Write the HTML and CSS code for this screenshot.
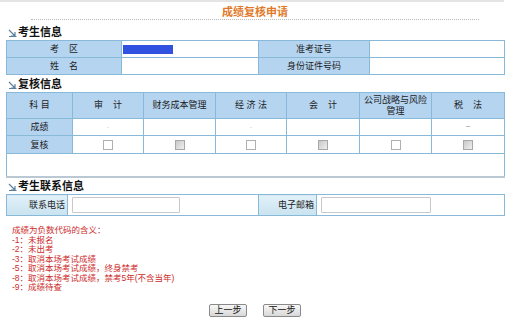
FILE: index.html
```html
<!DOCTYPE html>
<html lang="zh">
<head>
<meta charset="utf-8">
<link rel="stylesheet" href="styles.css">
</head>
<body>
<div class="topbar"></div>
<div class="page">
  <div class="title"><span>成绩复核申请</span></div>

  <div class="sec"><svg class="ico" width="9" height="8" viewBox="0 0 9 8"><path d="M1 1 L7 7 M7 3 V7 H3 M1 7.5 H8.5" stroke="#5b7f9e" stroke-width="1.2" fill="none"/></svg>考生信息</div>
  <table class="t1">
    <colgroup><col style="width:115px"><col style="width:137px"><col style="width:111px"><col style="width:135px"></colgroup>
    <tr><td class="lab">考&nbsp;&nbsp;&nbsp;&nbsp;区</td><td class="val"><span class="redact"></span></td><td class="lab">准考证号</td><td class="val"></td></tr>
    <tr><td class="lab">姓&nbsp;&nbsp;&nbsp;&nbsp;名</td><td class="val"></td><td class="lab">身份证件号码</td><td class="val"></td></tr>
  </table>

  <div class="sec"><svg class="ico" width="9" height="8" viewBox="0 0 9 8"><path d="M1 1 L7 7 M7 3 V7 H3 M1 7.5 H8.5" stroke="#5b7f9e" stroke-width="1.2" fill="none"/></svg>复核信息</div>
  <table class="t2">
    <colgroup><col style="width:66px"><col style="width:71px"><col style="width:72px"><col style="width:71px"><col style="width:73px"><col style="width:72px"><col style="width:73px"></colgroup>
    <tr class="head"><td>科 目</td><td>审&nbsp;&nbsp;&nbsp;&nbsp;计</td><td>财务成本管理</td><td>经 济 法</td><td>会&nbsp;&nbsp;&nbsp;&nbsp;计</td><td>公司战略与风险<br>管理</td><td>税&nbsp;&nbsp;&nbsp;&nbsp;法</td></tr>
    <tr class="score"><td class="lab">成绩</td><td class="faint">-</td><td></td><td class="faint">-</td><td></td><td></td><td class="dark">~</td></tr>
    <tr class="chk"><td class="lab">复核</td><td><span class="cb"></span></td><td><span class="cb dis"></span></td><td><span class="cb"></span></td><td><span class="cb dis"></span></td><td><span class="cb"></span></td><td><span class="cb dis"></span></td></tr>
    <tr class="empty"><td colspan="7"></td></tr>
  </table>

  <div class="sec"><svg class="ico" width="9" height="8" viewBox="0 0 9 8"><path d="M1 1 L7 7 M7 3 V7 H3 M1 7.5 H8.5" stroke="#5b7f9e" stroke-width="1.2" fill="none"/></svg>考生联系信息</div>
  <table class="t3">
    <colgroup><col style="width:61px"><col style="width:191px"><col style="width:58px"><col style="width:188px"></colgroup>
    <tr><td class="lab2">联系电话</td><td class="val"><span class="inp w1"></span></td><td class="lab2">电子邮箱</td><td class="val"><span class="inp w2"></span></td></tr>
  </table>

  <div class="notes">
    <div>成绩为负数代码的含义：</div>
    <div>-1：未报名</div>
    <div>-2：未出考</div>
    <div>-3：取消本场考试成绩</div>
    <div>-5：取消本场考试成绩，终身禁考</div>
    <div>-8：取消本场考试成绩，禁考5年(不含当年)</div>
    <div>-9：成绩待查</div>
  </div>

  <div class="btns"><span class="btn">上一步</span><span class="btn">下一步</span></div>
</div>
</body>
</html>
```
FILE: styles.css
```css
html, body { margin: 0; padding: 0; background: #fff; }
body { font-family: "Liberation Sans", "Noto Sans CJK SC", sans-serif; font-size: 9px; color: #222; }
.topbar { width: 504px; height: 2px; background: #e4e4e4; }
.page { width: 498px; margin-left: 6px; }
.title { width: 90%; height: 14px; margin: 0 auto; padding-top: 3px; text-align: center; font-size: 11px; line-height: 14px; font-weight: bold; color: #e07a2a; border-bottom: 1px dotted #b8b8b8; }
.sec { display: flex; align-items: center; gap: 1px; height: 14px; margin-top: 5px; margin-bottom: 1px; margin-left: 2px; font-size: 11px; line-height: 14px; font-weight: bold; color: #111; }
.t1 + .sec { margin-top: 2px; }
.t2 + .sec { margin-top: 1px; }
.ico { flex: none; margin-top: 2px; }
table { border-collapse: collapse; table-layout: fixed; width: 498px; }
td { border: 1px solid #88b9d8; padding: 0; text-align: center; vertical-align: middle; font-size: 9px; color: #222; overflow: hidden; }
.lab { background: #b4d4f0; }
.val { background: #fff; text-align: left; }
.t1 td { height: 16px; line-height: 12px; }
.redact { display: inline-block; width: 50px; height: 9px; background: #3152e0; margin-left: 1px; vertical-align: middle; }
.t2 .head td { background: #b4d4f0; height: 25px; line-height: 10.5px; }
.t2 .score td { height: 16px; line-height: 12px; }
.t2 .chk td { height: 17px; line-height: 12px; }
.t2 .empty td { height: 22px; border-bottom: 2px solid #b9c8d2; }
.faint { color: #d0d0d0; font-size: 7px; }
.dark { color: #777; font-size: 8px; }
.cb { display: inline-block; width: 8px; height: 8px; border: 1px solid #b0b0b0; background: #fff; vertical-align: middle; }
.cb.dis { background: linear-gradient(135deg, #c8c8c8, #f0f0f0); border-color: #a8a8a8; }
.t3 td { height: 20px; line-height: 12px; }
.lab2 { background: linear-gradient(#e2f1f9, #c8e3f0); text-align: right; padding-right: 2px; }
.inp { display: block; height: 14px; border: 1px solid #c8c8c8; border-radius: 1px; background: #fff; margin-left: 4px; }
.w1 { width: 106px; }
.w2 { width: 108px; }
.notes { margin-top: 10px; margin-left: 6px; color: #cc2b2b; font-size: 8.5px; line-height: 9.5px; }
.btns { display: flex; justify-content: center; gap: 16px; margin-top: 11px; }
.btn { width: 36px; height: 11px; line-height: 11px; text-align: center; font-size: 9px; color: #111; border: 1px solid #8a8a8a; border-radius: 2px; background: linear-gradient(#f8f8f8, #d8d8d8); }
```
